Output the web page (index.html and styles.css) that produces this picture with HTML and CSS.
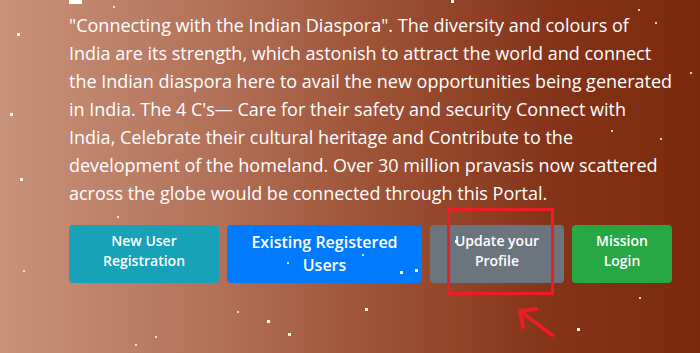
FILE: index.html
```html
<!DOCTYPE html>
<html lang="en">
<head>
    <meta charset="UTF-8">
    <meta name="viewport" content="width=device-width, initial-scale=1.0">
    <title>Pravasi Portal</title>
    <link rel="stylesheet" href="styles.css">
</head>
<body>

<div class="banner">
    <!-- bottom of the heading, cut off by the scroll -->
    <div class="heading-cut">
        <span class="cut cut-a"></span>
        <span class="cut cut-b"></span>
    </div>

    <p class="intro">"Connecting with the Indian Diaspora". The diversity and colours of<br>India are its strength, which astonish to attract the world and connect<br>the Indian diaspora here to avail the new opportunities being generated<br>in India. The 4 C's— Care for their safety and security Connect with<br>India, Celebrate their cultural heritage and Contribute to the<br>development of the homeland. Over 30 million pravasis now scattered<br>across the globe would be connected through this Portal.</p>

    <div class="actions">
        <a href="#" class="btn btn-info">New User<br>Registration</a>
        <a href="#" class="btn btn-primary btn-lg">Existing Registered<br>Users</a>
        <a href="#" class="btn btn-secondary">Update your<br>Profile</a>
        <a href="#" class="btn btn-success">Mission<br>Login</a>
    </div>

    <!-- annotation -->
    <div class="mark-box"></div>
    <svg class="mark-arrow" width="44" height="36" viewBox="0 0 44 36">
        <path d="M38 31 L6 7 M6 7 L22 5 M6 7 L9 23" fill="none" stroke="#ee1c25" stroke-width="4" stroke-linecap="round" stroke-linejoin="round"/>
    </svg>

    <!-- sparkles -->
    <span class="star" style="left:17px;top:33px"></span>
    <span class="star" style="left:10px;top:113px"></span>
    <span class="star" style="left:20px;top:178px"></span>
    <span class="star small" style="left:113px;top:6px"></span>
    <span class="star small" style="left:23px;top:270px"></span>
    <span class="star small" style="left:117px;top:216px"></span>
    <span class="star" style="left:267px;top:320px"></span>
    <span class="star" style="left:288px;top:333px"></span>
    <span class="star small" style="left:237px;top:311px"></span>
    <span class="star small" style="left:155px;top:336px"></span>
    <span class="star small" style="left:135px;top:344px"></span>
    <span class="star" style="left:365px;top:308px"></span>
    <span class="star" style="left:577px;top:328px"></span>
    <span class="star small" style="left:639px;top:297px"></span>
    <span class="star" style="left:400px;top:271px"></span>
    <span class="star" style="left:415px;top:269px"></span>
    <span class="star small" style="left:362px;top:254px"></span>
    <span class="star" style="left:455px;top:240px"></span>
    <span class="star small" style="left:655px;top:22px"></span>
    <span class="star small" style="left:690px;top:72px"></span>
    <span class="star small" style="left:660px;top:138px"></span>
    <span class="star small" style="left:611px;top:130px"></span>
    <span class="star small" style="left:638px;top:9px"></span>
    <span class="star small" style="left:287px;top:262px"></span>
</div>

</body>
</html>
```

FILE: styles.css
```css
body {
    margin: 0;
    font-family: "Open Sans", "Noto Sans", sans-serif;
}

.banner {
    position: relative;
    height: 353px;
    overflow: hidden;
    padding-left: 69px;
    background: linear-gradient(90deg, #c9927a 0%, #b3725a 30%, #9c5034 55%, #85341a 78%, #7b2a0c 100%);
}

.heading-cut {
    position: relative;
    height: 4px;
}

.cut {
    position: absolute;
    top: 0;
    background-color: #fff;
}

.cut-a {
    left: 0;
    width: 13px;
    height: 4px;
}

.cut-b {
    left: 382px;
    width: 3px;
    height: 3px;
}

.intro {
    width: 625px;
    margin: 7px 0 0;
    font-size: 18px;
    line-height: 28px;
    color: #fff;
    white-space: nowrap;
}

.actions {
    display: flex;
    gap: 8px;
    margin-top: 18px;
}

.btn {
    box-sizing: border-box;
    height: 58px;
    padding-top: 6px;
    border-radius: 4px;
    font-size: 14px;
    font-weight: 600;
    line-height: 20px;
    text-align: center;
    text-decoration: none;
    color: #fff;
}

.btn-lg {
    font-size: 16px;
    line-height: 23px;
}

.btn-info {
    width: 150px;
    background-color: #17a2b8;
}

.btn-primary {
    width: 195px;
    background-color: #007bff;
}

.btn-secondary {
    width: 134px;
    background-color: #6c757d;
}

.btn-success {
    width: 100px;
    background-color: #28a745;
}

.mark-box {
    position: absolute;
    left: 447px;
    top: 208px;
    width: 101px;
    height: 81px;
    border: 3px solid #ee1c25;
}

.mark-arrow {
    position: absolute;
    left: 514px;
    top: 304px;
}

.star {
    position: absolute;
    width: 3px;
    height: 3px;
    background-color: #fff8e8;
}

.star.small {
    width: 2px;
    height: 2px;
    opacity: 0.8;
}
```
